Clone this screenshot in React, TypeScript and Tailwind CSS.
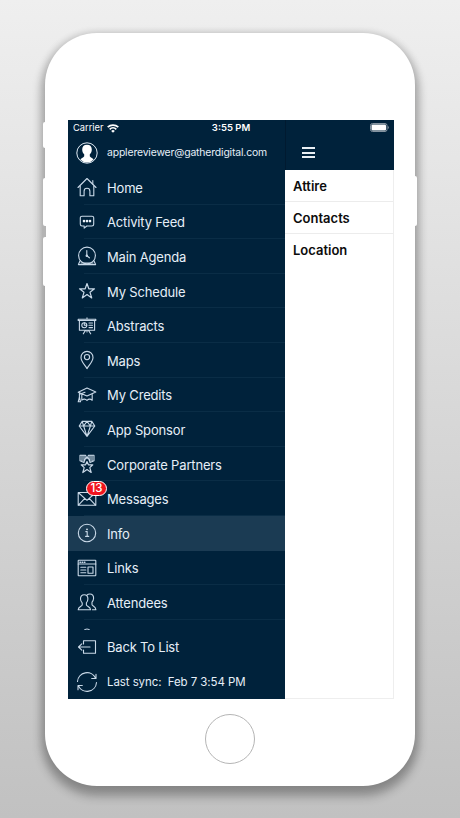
import React from "react";

type IconProps = { children: React.ReactNode };

const Icon = ({ children }: IconProps) => (
  <svg
    viewBox="0 0 20 20"
    className="w-5 h-5 shrink-0 overflow-visible"
    fill="none"
    stroke="#c9d9e8"
    strokeWidth="1.1"
    strokeLinejoin="round"
    strokeLinecap="round"
  >
    {children}
  </svg>
);

const HomeIcon = () => (
  <Icon>
    <path d="M1 10.5 10 1.5l9 9" />
    <path d="M3.2 9v9.8h3.9v-4.6a2.9 2.9 0 0 1 5.8 0v4.6h3.9V9M15.8 7V3.6" />
  </Icon>
);

const FeedIcon = () => (
  <Icon>
    <path d="M5 4.2h10a1.7 1.7 0 0 1 1.7 1.7v6.4a1.7 1.7 0 0 1-1.7 1.7H9.8l-2.600 2.200V14H5a1.7 1.7 0 0 1-1.7-1.700V5.900A1.700 1.700 0 0 1 5 4.200Z" />
    <g fill="#eef5fb" stroke="none">
      <circle cx="7" cy="9.1" r="1.3" />
      <circle cx="10" cy="9.1" r="1.3" />
      <circle cx="13" cy="9.1" r="1.3" />
    </g>
  </Icon>
);

const AgendaIcon = () => (
  <Icon>
    <circle cx="10" cy="9.5" r="8.4" />
    <path d="M3.2 14.6 1.4 18.6h17.2l-1.8-4M4 17h12" />
    <path d="M9.8 4.5v5.3l2.6 2" />
    <circle cx="9.8" cy="9.8" r="0.7" />
  </Icon>
);

const StarIcon = () => (
  <Icon>
    <path d="m10 2.5 1.800 5.300h5.700L13 11.300l1.700 5.600-4.700-3.400-4.700 3.400L7 11.300 2.500 7.800h5.700Z" strokeWidth="1.2" />
  </Icon>
);

const AbstractsIcon = () => (
  <Icon>
    <path d="M1.2 3.2h17.6M1.2 4.5h17.6M1.2 3.2v1.3M18.8 3.2v1.3M10 1.9v1.3M2.4 4.5v9.700h15.200V4.5M8.500 14.400l-2.200 3.400M11.500 14.400l2.200 3.400M10 14.200v1.800" />
    <circle cx="7.3" cy="9.2" r="2.5" />
    <path d="M7.3 6.800v2.400h2.400M12 7h3.500M12 9.200h3.500M12 11.600h3.500" />
  </Icon>
);

const MapsIcon = () => (
  <Icon>
    <path d="M10 18.600C7.400 14.500 4 11.200 4 7.400a6 6 0 0 1 12 0c0 3.800-3.400 7.100-6 11.200Z" />
    <circle cx="10" cy="7.1" r="2.6" />
  </Icon>
);

const CreditsIcon = () => (
  <Icon>
    <path d="M1.2 7.2 10 3l8.800 4L10 11ZM2.400 8v5.200M4.800 9.200v6c1.800-1.500 3.600-1.500 5.200.2 1.700-1.600 3.400-1.600 5.200-.2v-6" />
    <path d="M2.400 12.500 1.200 16.800h2.400ZM2.700 9.200 8 7.200" />
  </Icon>
);

const DiamondIcon = () => (
  <Icon>
    <path d="M5.2 2.400h9.600l3 4.600L10 17.400 2.200 7ZM2.200 7h15.600M5.200 2.400 6.600 7 10 17.400 13.400 7l1.400-4.600M6.600 7 10 2.400 13.400 7" />
  </Icon>
);

const PartnersIcon = () => (
  <Icon>
    <path d="M3 1.200h4v7.400L3 6.800ZM17 1.200h-4v7.400l4-1.800ZM7 1.200h1.500L10 4.800l1.500-3.600H13M7 8l2-4.800M13 8l-2-4.800M5 1.200v6.400M15 1.200v6.400" />
    <path d="m10 7.600 1.400 3.200h4.400l-3 2.800 1.400 4.900-4.200-2.900-4.200 2.900 1.400-4.900-3-2.800h4.400Z" strokeWidth="1.200" />
  </Icon>
);

const MessagesIcon = () => (
  <Icon>
    <path d="M1.2 3.500h17.600v12.800H1.200ZM1.200 3.500 10 11.300l8.800-7.800M1.200 16.300l6.600-6.900M18.800 16.300l-6.600-6.900" />
  </Icon>
);

const InfoIcon = () => (
  <Icon>
    <circle cx="10" cy="10" r="8.700" />
    <path d="M8.800 8.600h1.400v4.700M8.600 13.400h3.100" />
    <circle cx="10" cy="6.300" r="0.900" fill="#dfeaf4" stroke="none" />
  </Icon>
);

const LinksIcon = () => (
  <Icon>
    <rect x="1.2" y="2.2" width="17.6" height="15.6" rx="0.6" />
    <path d="M1.200 6h17.600M3.800 9.300h5M3.800 12h5M3.800 14.800h5M11 9h5v6.200h-5Z" />
    <path d="M3 4.200h.5M5.200 4.200h.5M7.400 4.200h.5" strokeWidth="1.500" />
  </Icon>
);

const AttendeesIcon = () => (
  <Icon>
    <path d="M7.200 2.800c2.400 0 3.800 1.700 3.700 4.200-.1 1.700-.7 3.100-1.500 3.900v2c0 1.300 4 1.600 4.200 4.800H1.200c0-3.200 4-3.500 4-4.800v-2C4.200 10 3.600 8.700 3.500 7c-.1-2.500 1.300-4.200 3.700-4.200Z" />
    <path d="M10 3.200c.6-.8 1.700-1.200 2.900-1.200 2.400 0 3.800 1.700 3.700 4.200-.1 1.700-.7 3.100-1.600 4v2.200c0 1.500 3.800 1.900 3.900 5.300h-3.400" />
  </Icon>
);

const BackIcon = () => (
  <Icon>
    <path d="M6.500 7V3.700h12v12.600h-12V13M13 10H1.500M4.800 6.900 1.500 10l3.300 3.100" />
  </Icon>
);

const SyncIcon = () => (
  <Icon>
    <path d="M.5 9.500A9.500 9.500 0 0 1 18.600 6.200M19.500 10.500A9.500 9.500 0 0 1 1.400 13.800M19 2.200v4.300h-4.300M1 17.800v-4.300h4.300" />
  </Icon>
);

const ProfileIcon = () => (
  <svg viewBox="0 0 22 22" className="w-[22px] h-[22px] shrink-0">
    <circle cx="11" cy="11" r="10.2" fill="none" stroke="#dfeaf4" />
    <path
      d="M11 2.800c3.200 0 4.900 2 4.800 4.900-.1 2-.9 3.600-2 4.600v2c.4 1.100 2.700 1.500 3.900 3.200A9.600 9.600 0 0 1 11 20.600a9.600 9.600 0 0 1-6.700-3.100c1.200-1.700 3.500-2.100 3.900-3.200v-2c-1.100-1-1.900-2.600-2-4.600-.1-2.900 1.600-4.900 4.800-4.900Z"
      fill="#fff"
    />
  </svg>
);

const menuItems = [
  { name: "Home", icon: HomeIcon },
  { name: "Activity Feed", icon: FeedIcon },
  { name: "Main Agenda", icon: AgendaIcon },
  { name: "My Schedule", icon: StarIcon },
  { name: "Abstracts", icon: AbstractsIcon },
  { name: "Maps", icon: MapsIcon },
  { name: "My Credits", icon: CreditsIcon },
  { name: "App Sponsor", icon: DiamondIcon },
  { name: "Corporate Partners", icon: PartnersIcon },
  { name: "Messages", icon: MessagesIcon, badge: 13 },
  { name: "Info", icon: InfoIcon, active: true },
  { name: "Links", icon: LinksIcon },
  { name: "Attendees", icon: AttendeesIcon },
];

const pages = ["Attire", "Contacts", "Location"];

const StatusBar = () => (
  <div className="absolute top-0 left-0 w-full h-4 flex items-center justify-between pl-[5px] pr-[5px] text-white">
    <div className="flex items-center gap-1 w-[120px]">
      <span className="text-[9.3px] leading-4">Carrier</span>
      <svg viewBox="0 0 12 9" className="w-3 h-[9px]" fill="none" stroke="#fff" strokeWidth="1.7">
        <path d="M.7 3.200a7.600 7.600 0 0 1 10.600 0M2.700 5.300a4.700 4.700 0 0 1 6.600 0" />
        <path d="M4.200 6.900a2.600 2.600 0 0 1 3.600 0L6 8.700Z" fill="#fff" stroke="none" />
      </svg>
    </div>
    <span className="text-[9.500px] leading-4 font-semibold">3:55 PM</span>
    <div className="flex items-center justify-end w-[120px] pb-px">
      <svg viewBox="0 0 19 9" className="w-[19px] h-[9px]">
        <rect x="0.5" y="0.5" width="16.500" height="8" rx="2" fill="none" stroke="#8493a0" />
        <rect x="1.500" y="1.500" width="14.500" height="6" rx="1" fill="#fff" />
        <path d="M17.900 3v3c1.200-.4 1.200-2.600 0-3Z" fill="#8493a0" />
      </svg>
    </div>
  </div>
);

const Sidebar = () => (
  <div className="w-[217px] h-full shrink-0 flex flex-col bg-[#00223b] text-[#e6eff8]">
    <div className="h-[50px] pt-4 pl-2 flex items-center gap-[9px] shrink-0">
      <ProfileIcon />
      <span className="text-[10.4px] tracking-[-0.15px]">applereviewer@gatherdigital.com</span>
    </div>

    <div className="h-[460px] overflow-hidden shrink-0">
      <ul>
        {menuItems.map((item) => (
          <li
            key={item.name}
            className={`relative h-[34.6px] pl-[9px] flex items-center gap-[10px] ${
              item.active ? "bg-[#1b3b53]" : ""
            }`}
          >
            <item.icon />
            <span className="pt-px text-[13px] leading-5 tracking-[-0.16px]">{item.name}</span>
            {item.badge && (
              <span className="absolute left-[18px] top-0 w-[21px] h-[15px] rounded-full border-[1.5px] border-white bg-[#f0141e] text-white text-[11.5px] leading-[12.5px] font-medium text-center">
                {item.badge}
              </span>
            )}
            {!item.active && (
              <span className="absolute bottom-0 left-4 right-0 h-px bg-[#0a2d46]" />
            )}
          </li>
        ))}
        {/* next row, mostly hidden behind the footer */}
        <li className="h-[34.6px] pl-[9px] pt-[8px]">
          <svg viewBox="0 0 20 20" className="w-5 h-5" fill="none" stroke="#c9d9e8">
            <path d="M8 1.500q2-1 4 0M8 1.500c-2 1.200-2.700 3-2 5.500M12 1.500c2 1.200 2.700 3 2 5.500" />
          </svg>
        </li>
      </ul>
    </div>

    <div className="h-[34.5px] pl-[9px] flex items-center gap-[10px]">
      <BackIcon />
      <span className="text-[13px] tracking-[-0.2px]">Back To List</span>
    </div>
    <div className="h-[34.5px] pl-[9px] flex items-center gap-[10px]">
      <SyncIcon />
      <span className="pt-px text-[11.500px] tracking-[-0.08px] whitespace-pre">Last sync:  Feb 7 3:54 PM</span>
    </div>
  </div>
);

const Content = () => (
  <div className="flex-1 flex flex-col bg-white border-r border-b border-[#eeeeee]">
    <div className="h-[50px] -mr-px pt-[15px] pl-4 flex items-center bg-[#00223b] border-l border-[#001a30]">
      <div className="flex flex-col gap-[2.5px]">
        <span className="w-[13px] h-[2px] bg-[#e9eff4]" />
        <span className="w-[13px] h-[2px] bg-[#e9eff4]" />
        <span className="w-[13px] h-[2px] bg-[#e9eff4]" />
      </div>
    </div>
    <ul>
      {pages.map((page, index) => (
        <li
          key={page}
          className={`h-8 pl-2 pt-[2px] flex items-center text-[13px] font-semibold text-[#0c0c0c] ${
            index < pages.length - 1 ? "border-b border-[#ececec]" : ""
          }`}
        >
          {page}
        </li>
      ))}
    </ul>
  </div>
);

const App = () => {
  return (
    <div className="w-[460px] h-[818px] overflow-hidden flex justify-center pt-[33px] bg-linear-to-b from-[#efefef] to-[#c1c1c1] font-['Inter',sans-serif]">
      <div className="relative w-[370px] h-[753px] rounded-[52px] bg-white pt-[87px] pl-[23px] shadow-[0_7px_10px_4px_rgba(0,0,0,0.24),0_2px_8px_2px_rgba(0,0,0,0.12)]">
        {/* Side buttons */}
        <span className="absolute -left-[2px] top-[89px] w-1 h-[26px] rounded-l-xs bg-white" />
        <span className="absolute -left-[2px] top-[145px] w-1 h-[48px] rounded-l-xs bg-white" />
        <span className="absolute -left-[2px] top-[193px] w-[3px] h-[11px] bg-[#b4b4b4]" />
        <span className="absolute -left-[2px] top-[204px] w-1 h-[49px] rounded-l-xs bg-white" />
        <span className="absolute -right-[2px] top-[143px] w-1 h-[50px] rounded-r-xs bg-white" />

        <div className="relative w-[326px] h-[579px] flex">
          <Sidebar />
          <Content />
          <StatusBar />
        </div>

        <div className="mt-[15px] ml-[137px] w-[50px] h-[50px] rounded-full border border-[#b5b5b5]" />
      </div>
    </div>
  );
};

export default App;
